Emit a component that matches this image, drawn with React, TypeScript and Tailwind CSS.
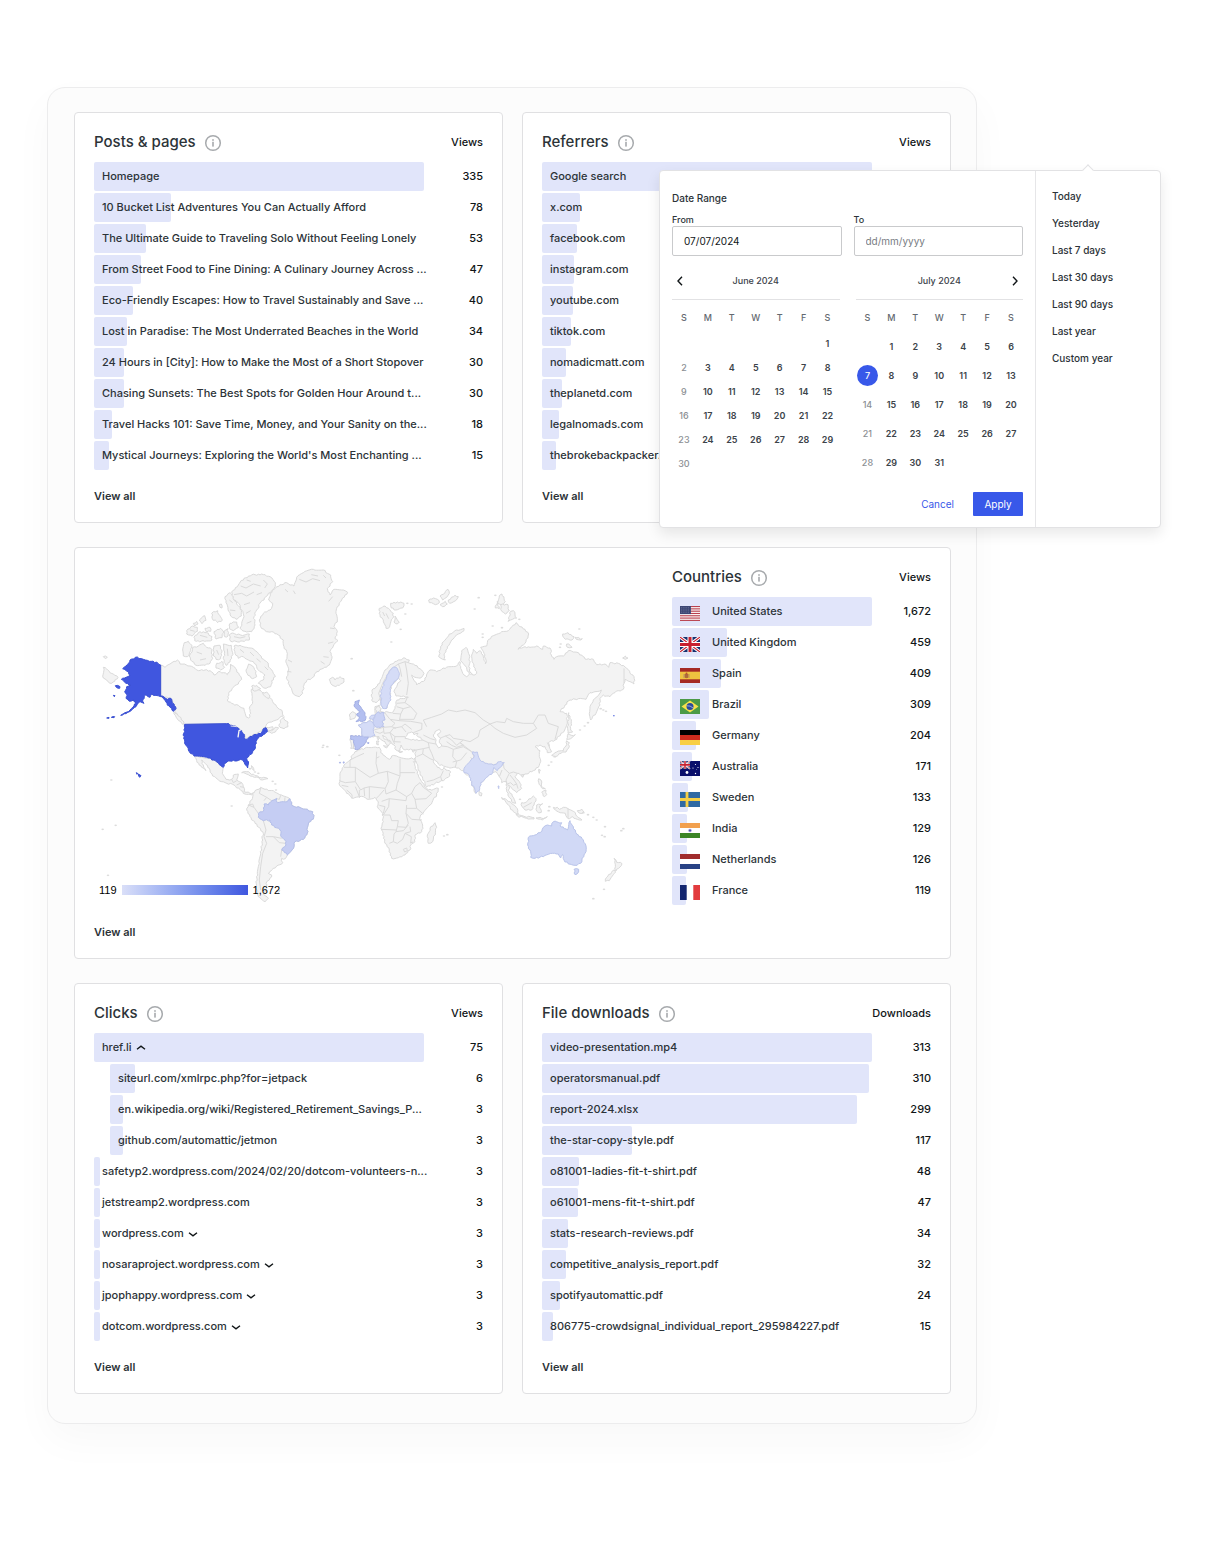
import type { ReactNode } from 'react';

/* ---------- shared pieces ---------- */

function InfoIcon() {
  return (
    <svg width="18" height="18" viewBox="0 0 18 18" fill="none" aria-hidden="true">
      <circle cx="9" cy="9" r="7.3" stroke="#a7aaad" strokeWidth="1.5" />
      <rect x="8.2" y="7.8" width="1.600" height="4.8" fill="#a7aaad" />
      <rect x="8.2" y="5.2" width="1.600" height="1.6" fill="#a7aaad" />
    </svg>
  );
}

function Chevron({ up = false }: { up?: boolean }) {
  return (
    <svg width="10" height="10" viewBox="0 0 10 10" fill="none" stroke="#101517" strokeWidth="1.4" aria-hidden="true">
      <path d={up ? 'M1 6.3 5 3.2 9 6.3' : 'M1 3.7 5 6.8 9 3.7'} />
    </svg>
  );
}

type Row = {
  name: string;
  value?: string;
  pct: number;
  child?: boolean;
  toggle?: 'up' | 'down';
  flag?: ReactNode;
};

function StatsTable({ title, unit, rows }: { title: string; unit: string; rows: Row[] }) {
  return (
    <table className="w-full table-fixed border-separate border-spacing-0">
      <colgroup>
        <col />
        <col className="w-[59px]" />
      </colgroup>
      <thead>
        <tr className="h-[39px]">
          <th scope="col" className="p-0 text-left align-middle font-medium">
            <span className="flex items-center gap-2 text-[15px] whitespace-nowrap">
              {title}
              <InfoIcon />
            </span>
          </th>
          <th scope="col" className="p-0 align-middle font-medium text-[#101517]">
            <span className="flex justify-end">{unit}</span>
          </th>
        </tr>
      </thead>
      <tbody>
        {rows.map((row) => (
          <tr key={row.name} className="h-[31px]">
            <td className={row.child ? 'p-0 pl-4 align-top' : 'p-0 align-top'}>
              <div className="grid h-[29px] items-center">
                <span className="col-start-1 row-start-1 h-full rounded-xs bg-[#e1e5fa]" style={{ width: `${row.pct}%` }} />
                <span className="col-start-1 row-start-1 flex items-center gap-1 pl-2 whitespace-nowrap">
                  {row.flag && <span className="mr-2 mt-1">{row.flag}</span>}
                  {row.toggle ? (
                    <button type="button" aria-expanded={row.toggle === 'up'} className="flex items-center gap-1">
                      {row.name}
                      <Chevron up={row.toggle === 'up'} />
                    </button>
                  ) : (
                    row.name
                  )}
                </span>
              </div>
            </td>
            <td className="p-0 text-right align-top leading-[29px] text-[#101517]">{row.value}</td>
          </tr>
        ))}
      </tbody>
    </table>
  );
}

function Card({ children }: { children: ReactNode }) {
  return (
    <section className="rounded border border-[#e0e0e2] bg-white px-[19px] pt-2.5 pb-4">
      {children}
      <a href="#all" className="mt-3.5 block w-fit leading-5 font-semibold">
        View all
      </a>
    </section>
  );
}

/* ---------- flags ---------- */

function Flag({ children }: { children: ReactNode }) {
  return (
    <svg width="20" height="15" viewBox="0 0 20 15" aria-hidden="true">
      {children}
    </svg>
  );
}

function UnionJack() {
  return (
    <>
      <rect width="20" height="15" fill="#17306f" />
      <path d="M0 0 20 15M20 0 0 15" stroke="#fff" strokeWidth="3.2" />
      <path d="M0 0 20 15M20 0 0 15" stroke="#c8202f" strokeWidth="1.1" />
      <path d="M10 0V15M0 7.5H20" stroke="#fff" strokeWidth="5" />
      <path d="M10 0V15M0 7.5H20" stroke="#c8202f" strokeWidth="3" />
    </>
  );
}

const flags = {
  us: (
    <Flag>
      <rect width="20" height="15" fill="#fff" />
      {[0, 1, 2, 3, 4, 5, 6].map((i) => (
        <rect key={i} y={i * 2.3} width="20" height="1.15" fill="#b8404e" />
      ))}
      <rect width="11" height="8.1" fill="#3c4673" />
      <path d="M1 1.8H10.500M1 4H10.500M1 6.200H10.500" stroke="#8d94b3" strokeWidth=".7" strokeDasharray=".8 1" />
    </Flag>
  ),
  gb: (
    <Flag>
      <UnionJack />
    </Flag>
  ),
  es: (
    <Flag>
      <rect width="20" height="15" fill="#a52a24" />
      <rect y="3.7" width="20" height="7.6" fill="#eec33f" />
      <path d="M4.500 6h4v3.500q-2 1.500-4 0z" fill="#ad6a3c" />
      <path d="M3.700 6v4M9.300 6v4" stroke="#b99a6a" strokeWidth=".7" />
      <circle cx="6.5" cy="5.600" r="1" fill="#b5532f" />
    </Flag>
  ),
  br: (
    <Flag>
      <rect width="20" height="15" fill="#4c9a46" />
      <path d="M10 1.500 18.500 7.500 10 13.500 1.500 7.500z" fill="#f7e04b" />
      <circle cx="10" cy="7.500" r="3.500" fill="#2b4a9c" />
      <path d="M6.700 6.800q3.600-.5 6.400 2.200" stroke="#dfe7f4" strokeWidth=".6" fill="none" />
    </Flag>
  ),
  de: (
    <Flag>
      <rect width="20" height="5" fill="#000" />
      <rect y="5" width="20" height="5" fill="#cc2b1d" />
      <rect y="10" width="20" height="5" fill="#f8cf46" />
    </Flag>
  ),
  au: (
    <Flag>
      <rect width="20" height="15" fill="#0a0f6b" />
      <g transform="scale(.5 .52)">
        <UnionJack />
      </g>
      <g fill="#fff">
        <circle cx="7" cy="11.500" r="1.400" />
        <circle cx="15.500" cy="3.500" r=".6" />
        <circle cx="13" cy="7" r=".6" />
        <circle cx="18" cy="6.500" r=".6" />
        <circle cx="15.500" cy="12.500" r=".7" />
        <circle cx="16.700" cy="8.600" r=".4" />
      </g>
    </Flag>
  ),
  se: (
    <Flag>
      <rect width="20" height="15" fill="#2f69a3" />
      <path d="M7 0V15M0 7.500H20" stroke="#f5cf47" strokeWidth="2.800" />
    </Flag>
  ),
  in: (
    <Flag>
      <rect width="20" height="15" fill="#fff" />
      <rect width="20" height="5" fill="#f2a04e" />
      <rect y="10" width="20" height="5" fill="#3c8527" />
      <circle cx="10" cy="7.500" r="1.700" fill="#9a97d6" />
      <circle cx="10" cy="7.500" r=".8" fill="#3a35a0" />
    </Flag>
  ),
  nl: (
    <Flag>
      <rect width="20" height="5" fill="#a02c2d" />
      <rect y="5" width="20" height="5" fill="#fff" />
      <rect y="10" width="20" height="5" fill="#284285" />
    </Flag>
  ),
  fr: (
    <Flag>
      <rect width="20" height="15" fill="#fff" />
      <rect width="6.700" height="15" fill="#12256f" />
      <rect x="13.300" width="6.700" height="15" fill="#e23b3e" />
    </Flag>
  ),
};

/* ---------- data ---------- */

const views = (name: string, n: number): Row => ({ name, value: String(n), pct: (n / 335) * 100 });

const posts: Row[] = [
  views('Homepage', 335),
  views('10 Bucket List Adventures You Can Actually Afford', 78),
  views('The Ultimate Guide to Traveling Solo Without Feeling Lonely', 53),
  views('From Street Food to Fine Dining: A Culinary Journey Across ...', 47),
  views('Eco-Friendly Escapes: How to Travel Sustainably and Save ...', 40),
  views('Lost in Paradise: The Most Underrated Beaches in the World', 34),
  views('24 Hours in [City]: How to Make the Most of a Short Stopover', 30),
  views('Chasing Sunsets: The Best Spots for Golden Hour Around t...', 30),
  views("Travel Hacks 101: Save Time, Money, and Your Sanity on the...", 18),
  views("Mystical Journeys: Exploring the World's Most Enchanting ...", 15),
];

const referrers: Row[] = [
  { name: 'Google search', pct: 100 },
  { name: 'x.com', pct: 11.6 },
  { name: 'facebook.com', pct: 10.7 },
  { name: 'instagram.com', pct: 9.8 },
  { name: 'youtube.com', pct: 9.4 },
  { name: 'tiktok.com', pct: 8.8 },
  { name: 'nomadicmatt.com', pct: 7.3 },
  { name: 'theplanetd.com', pct: 6.2 },
  { name: 'legalnomads.com', pct: 5.2 },
  { name: 'thebrokebackpacker.', pct: 4.2 },
];

const country = (name: string, n: number, flag: ReactNode): Row => ({
  name,
  value: n.toLocaleString('en-US'),
  pct: (n / 1672) * 100,
  flag,
});

const countries: Row[] = [
  country('United States', 1672, flags.us),
  country('United Kingdom', 459, flags.gb),
  country('Spain', 409, flags.es),
  country('Brazil', 309, flags.br),
  country('Germany', 204, flags.de),
  country('Australia', 171, flags.au),
  country('Sweden', 133, flags.se),
  country('India', 129, flags.in),
  country('Netherlands', 126, flags.nl),
  country('France', 119, flags.fr),
];

const clicks: Row[] = [
  { name: 'href.li', value: '75', pct: 100, toggle: 'up' },
  { name: 'siteurl.com/xmlrpc.php?for=jetpack', value: '6', pct: 8, child: true },
  { name: 'en.wikipedia.org/wiki/Registered_Retirement_Savings_P...', value: '3', pct: 4, child: true },
  { name: 'github.com/automattic/jetmon', value: '3', pct: 4, child: true },
  { name: 'safetyp2.wordpress.com/2024/02/20/dotcom-volunteers-n...', value: '3', pct: 1.8 },
  { name: 'jetstreamp2.wordpress.com', value: '3', pct: 1.8 },
  { name: 'wordpress.com', value: '3', pct: 1.8, toggle: 'down' },
  { name: 'nosaraproject.wordpress.com', value: '3', pct: 1.8, toggle: 'down' },
  { name: 'jpophappy.wordpress.com', value: '3', pct: 1.8, toggle: 'down' },
  { name: 'dotcom.wordpress.com', value: '3', pct: 1.8, toggle: 'down' },
];

const downloads: Row[] = [
  { name: 'video-presentation.mp4', value: '313', pct: 100 },
  { name: 'operatorsmanual.pdf', value: '310', pct: 99 },
  { name: 'report-2024.xlsx', value: '299', pct: 95.5 },
  { name: 'the-star-copy-style.pdf', value: '117', pct: 27.3 },
  { name: 'o81001-ladies-fit-t-shirt.pdf', value: '48', pct: 11.2 },
  { name: 'o61001-mens-fit-t-shirt.pdf', value: '47', pct: 10.9 },
  { name: 'stats-research-reviews.pdf', value: '34', pct: 7.9 },
  { name: 'competitive_analysis_report.pdf', value: '32', pct: 7.4 },
  { name: 'spotifyautomattic.pdf', value: '24', pct: 5.5 },
  { name: '806775-crowdsignal_individual_report_295984227.pdf', value: '15', pct: 3.4 },
];

/* ---------- world map ---------- */

/* Turns a list of points into a closed outline with an irregular coast.
   The offsets depend only on a segment's end points, so neighbours share edges. */
function coast(points: string, ox = 0, oy = 0) {
  const p = points
    .trim()
    .split(/\s+/)
    .map((s) => s.split(',').map(Number))
    .map(([x, y]) => [x + ox, y + oy]);
  const out: string[] = [];
  p.forEach(([ax, ay], i) => {
    const [bx, by] = p[(i + 1) % p.length];
    out.push(`${ax},${ay}`);
    const len = Math.hypot(bx - ax, by - ay);
    const flip = ax > bx || (ax === bx && ay > by);
    const [sx, sy, ex, ey] = flip ? [bx, by, ax, ay] : [ax, ay, bx, by];
    if (len < 8 || len > 70) return;
    const n = Math.floor(len / 5);
    const mids: string[] = [];
    for (let k = 1; k < n; k++) {
      const h = Math.sin(sx * 12.9 + sy * 78.2 + k * 37.7) * 43758.5;
      const r = (h - Math.floor(h) - 0.5) * 5;
      const t = k / n;
      mids.push(
        `${(sx + (ex - sx) * t - ((ey - sy) / len) * r).toFixed(1)},${(sy + (ey - sy) * t + ((ex - sx) / len) * r).toFixed(1)}`,
      );
    }
    out.push(...(flip ? mids.reverse() : mids));
  });
  return `M${out.join('L')}Z`;
}

type Shape = [points: string, ox?: number, oy?: number];

const land: Shape[] = [
  // Canada
  ['212,315 225,322 240,312 252,304 262,300 270,312 283,312 300,318 310,322 325,332 345,330 360,332 372,345 385,335 400,338 412,344 420,330 422,312 430,318 440,330 448,345 455,358 445,372 430,382 416,400 412,420 425,430 445,436 462,445 468,470 476,474 482,460 478,445 488,425 486,405 484,388 495,385 510,390 520,400 535,410 548,425 560,440 575,450 580,468 565,478 545,486 530,492 520,505 530,502 548,500 550,508 534,514 528,503 515,510 500,520 470,535 462,520 445,505 430,498 410,491 284,493 275,480 262,468 255,455 258,446 252,432 240,416 222,412 212,410'],
  ['532,515 545,512 555,502 566,504 556,516 545,520'],
  ['568,492 574,478 582,470 584,480 594,486 594,500 582,506 570,502'],
  ['432,258 450,256 470,262 490,266 505,280 515,295 530,305 540,325 550,340 556,350 545,362 542,380 528,385 515,378 505,370 520,360 525,345 510,335 500,320 490,305 475,300 460,290 445,295 435,280'],
  ['468,330 476,312 488,318 498,334 500,350 488,356 474,346'],
  ['485,378 500,376 512,386 500,392 488,390'],
  ['518,398 530,396 540,408 536,416 524,408'],
  ['283,248 295,244 306,256 302,272 292,290 280,288 278,270'],
  ['308,262 325,258 340,250 350,262 365,268 368,295 360,310 340,315 318,316 302,300 298,288 306,276'],
  ['372,258 390,256 396,276 392,296 378,298 370,282'],
  ['400,252 424,256 428,278 420,306 408,316 400,296 404,276'],
  ['380,310 396,304 404,322 392,330 378,324'],
  ['290,212 308,198 322,202 322,214 306,228 290,222'],
  ['312,232 330,215 350,218 366,230 366,240 344,244 314,242'],
  ['328,180 344,167 348,181 336,191'],
  ['310,190 320,184 324,192 314,198'],
  ['365,160 383,152 389,166 397,180 383,188 367,176'],
  ['372,215 392,205 400,213 396,233 378,237'],
  ['388,134 394,132 396,144 390,142'],
  ['345,205 360,202 362,214 350,216'],
  ['402,214 414,206 414,228 404,230'],
  ['418,225 428,219 452,225 478,222 478,240 448,246 422,244'],
  ['420,190 440,186 446,202 430,212 418,206'],
  ['405,110 420,98 430,112 440,132 452,142 454,168 438,178 424,170 414,148 408,128'],
  ['425,96 445,75 462,55 485,45 515,42 540,50 556,68 552,85 535,100 522,120 510,130 500,150 492,170 495,195 485,215 465,214 450,205 455,190 462,170 455,150 450,135 432,120'],
  ['252,455 262,462 282,486 280,494 266,482 256,466'],
  ['40,322 58,334 74,346 84,352 74,364 60,370 50,360 40,354'],
  ['40,290 46,288 52,292 46,296'],
  // Greenland, Iceland, Arctic islands
  ['508,180 520,160 540,150 548,130 536,120 540,100 560,80 590,68 612,78 620,52 640,38 670,28 700,30 722,45 728,65 712,85 720,105 732,88 760,90 773,97 755,120 742,140 738,160 742,180 732,200 742,215 735,236 744,242 730,258 720,275 726,290 718,315 700,325 680,335 665,355 650,362 640,380 638,400 628,410 610,402 600,380 590,350 596,330 588,300 592,280 582,260 580,240 565,225 545,215 525,212 512,200'],
  ['718,358 728,352 735,360 750,350 762,356 762,366 748,376 732,378 722,370'],
  ['868,145 885,138 895,145 910,160 908,175 895,205 888,205 880,180 870,170'],
  ['902,130 922,126 942,130 938,144 918,150 904,144'],
  ['915,168 928,186 922,192 912,186'],
  ['1016,120 1030,114 1042,118 1048,128 1036,134 1018,128'],
  ['1050,108 1064,100 1074,88 1078,100 1070,112 1058,120'],
  ['1075,120 1095,106 1105,110 1097,122 1079,130'],
  ['1050,134 1066,124 1072,132 1058,140'],
  ['1122,205 1100,210 1078,222 1060,245 1050,270 1046,290 1058,298 1066,300 1062,285 1072,260 1085,240 1105,222 1122,212'],
  ['1228,108 1236,102 1246,125 1240,135 1222,130'],
  ['1232,134 1254,134 1258,152 1246,162 1232,148'],
  ['1216,144 1222,124 1228,146'],
  ['1262,154 1270,152 1280,174 1262,180 1254,184'],
  ['1418,222 1434,218 1452,230 1446,240 1426,238 1418,228'],
  ['1455,232 1477,236 1473,240 1459,238'],
  ['1430,252 1436,252 1446,262 1432,262'],
  ['1598,294 1606,288 1614,294 1606,298'],
  // Europe and Asia
  ['845,410 846,390 862,378 875,355 885,330 905,312 925,300 945,294 958,300 955,308 975,316 995,330 1002,340 995,352 975,352 965,345 972,362 980,375 990,370 1005,360 1012,340 1020,330 1040,335 1055,328 1075,320 1100,318 1110,305 1112,325 1122,345 1130,350 1138,342 1126,318 1112,302 1115,272 1128,262 1138,285 1138,330 1145,340 1148,345 1160,340 1150,310 1145,285 1150,268 1160,280 1170,272 1180,290 1186,312 1188,300 1182,280 1172,262 1190,258 1196,238 1215,225 1235,215 1255,212 1265,200 1278,188 1290,200 1305,208 1316,222 1308,245 1300,255 1284,268 1300,262 1320,262 1340,258 1358,268 1360,258 1380,264 1384,285 1392,298 1400,290 1420,288 1435,272 1455,276 1475,285 1485,297 1510,298 1520,314 1545,312 1556,322 1560,308 1590,312 1610,325 1620,340 1632,350 1632,372 1620,365 1605,358 1602,370 1600,388 1585,392 1570,400 1560,410 1540,405 1530,415 1530,435 1520,455 1502,480 1498,460 1500,440 1510,420 1528,402 1534,390 1515,395 1500,398 1488,418 1465,416 1440,420 1425,435 1410,455 1430,460 1432,485 1422,515 1395,540 1375,548 1378,560 1385,575 1372,578 1365,560 1350,555 1335,560 1350,572 1348,590 1352,605 1345,622 1325,635 1305,642 1295,648 1282,640 1275,650 1288,665 1295,685 1285,692 1280,698 1270,690 1262,680 1255,675 1258,695 1270,712 1277,730 1268,728 1256,710 1250,690 1248,665 1235,668 1228,650 1218,635 1208,638 1200,640 1190,652 1172,668 1168,690 1158,700 1152,692 1145,670 1138,645 1130,645 1120,632 1100,624 1075,622 1060,618 1045,612 1032,598 1030,605 1042,622 1056,630 1062,622 1068,630 1082,636 1075,652 1050,665 1010,680 1005,670 990,640 980,610 975,595 978,570 940,568 933,555 930,572 918,570 912,555 890,535 878,525 880,532 892,542 902,550 895,558 885,545 865,530 855,528 835,532 822,555 800,570 782,565 782,545 782,527 817,527 815,505 805,495 825,488 840,482 850,468 856,462 855,440 868,435 872,455 905,458 915,445 918,425 930,415 955,412 940,408 918,408 912,395 922,375 932,362 925,352 910,370 900,390 900,415 888,447 875,440 870,415 858,428 848,425'],
  ['1436,458 1444,485 1442,510 1448,516 1434,520 1434,490'],
  ['856,448 866,438 874,446 870,458 860,458'],
  ['778,465 788,455 798,461 794,475 780,479'],
  ['862,530 867,530 865,540'],
  ['860,543 867,543 865,555 860,553'],
  ['880,557 894,558 890,564'],
  ['925,574 938,575 930,578'],
  ['966,572 975,569 970,577'],
  // Mexico and Central America
  ['312,78 330,82 355,84 372,90 385,98 400,112 397,130 408,148 425,148 430,135 445,132 440,150 455,158 460,170 462,185 480,190 490,188 485,195 465,192 450,178 432,165 395,155 368,138 360,120 345,100 335,90 340,105 348,122 335,112 320,92', 0, 510],
  ['455,128 470,125 495,137 507,142 493,142 475,134', 0, 510],
  ['505,142 521,142 534,146 511,149', 0, 510],
  ['484,107 488,110 492,122 486,116', 0, 510],
  // South America
  ['488,190 495,182 512,172 525,178 550,182 575,195 598,205 608,228 635,235 668,245 671,262 655,282 650,315 640,328 615,335 612,350 592,375 586,386 575,385 578,398 560,408 545,420 535,430 545,435 538,450 528,460 530,475 520,490 535,505 525,515 505,500 498,470 502,430 508,400 512,370 518,330 518,305 495,280 480,260 470,240 475,225 485,210', 0, 510],
  ['560,482 570,482 566,487', 0, 510],
  // Africa
  ['105,185 115,180 135,174 160,172 178,172 182,188 195,198 208,208 215,198 230,198 250,205 270,206 285,205 288,216 280,215 286,230 295,255 305,275 318,292 325,300 355,295 350,315 330,345 312,365 302,375 300,390 308,405 305,425 285,435 285,455 272,465 270,480 255,495 235,503 215,505 208,480 195,460 188,425 183,415 190,395 188,370 172,350 175,335 165,322 148,328 130,320 100,325 80,310 65,292 57,280 60,250 72,225 90,210 98,195', 690, 390],
  ['345,398 350,412 338,455 325,460 322,440 330,415', 690, 390],
  // South-east Asia, Japan, Oceania
  ['125,232 140,240 160,254 172,266 175,282 160,275 145,255', 1110, 480],
  ['168,282 190,288 222,293 222,297 200,295 172,288', 1110, 480],
  ['228,294 240,292 250,296 262,290 248,300 234,297', 1110, 480],
  ['185,248 200,245 220,228 228,236 222,255 215,270 195,270 186,260', 1110, 480],
  ['230,255 248,251 238,261 244,277 236,279 228,268', 1110, 480],
  ['236,176 243,180 244,198 256,206 248,206 238,194', 1110, 480],
  ['245,217 258,210 260,224 254,230', 1110, 480],
  ['280,262 292,262 298,268 310,262 326,268 346,278 352,290 366,300 352,298 338,290 324,296 316,280 296,276', 1110, 480],
  ['352,272 366,268 372,276 360,280', 1110, 480],
  ['275,106 290,96 310,92 318,78 320,62 328,68 326,84 318,96 298,100 286,110', 1110, 480],
  ['320,58 324,42 334,46 346,44 332,56', 1110, 480],
  ['236,148 241,150 238,160', 1110, 480],
  ['184,164 192,164 188,172', 1110, 480],
  ['58,214 66,220 64,228 58,226', 1110, 480],
  ['462,415 470,427 486,431 476,445 468,453 464,447 466,433', 1110, 480],
  ['462,450 467,456 448,482 436,484 440,472', 1110, 480],
];

const water: Shape[] = [
  ['945,535 952,520 965,516 972,524 984,520 980,526 992,532 998,540 975,541 958,538'],
  ['1035,515 1048,508 1052,514 1042,523 1052,534 1048,542 1055,558 1046,564 1038,552 1036,535 1030,524'],
];

const highlighted: { fill: string; stroke: string; shapes: Shape[] }[] = [
  {
    fill: '#4056df',
    stroke: '#3a50d2',
    shapes: [
      ['212,315 212,410 198,406 185,402 180,412 168,404 158,420 162,430 150,425 138,440 125,450 112,458 98,465 92,466 105,458 120,450 132,438 138,428 130,420 118,424 108,415 112,405 104,395 110,380 122,376 108,370 94,358 108,352 120,346 116,336 98,326 108,318 120,300 142,291 160,298 178,304 200,306'],
      ['212,408 222,411 232,418 240,414 252,432 258,446 250,454 240,442 228,426'],
      ['76,377 90,380 89,385 79,382'],
      ['70,406 75,407 73,410'],
      ['50,474 57,472 57,475'],
      ['64,472 74,470 72,473'],
      ['284,493 410,491 430,498 446,505 462,520 466,538 490,525 515,517 520,506 528,503 532,515 520,524 505,534 498,545 496,565 485,582 470,595 475,612 473,624 463,608 458,600 435,603 420,603 402,612 400,622 385,608 372,600 355,594 312,588 295,570 284,545 281,520'],
      ['139,128 143,130 141,133', 0, 510],
      ['145,134 153,139 149,144 146,140', 0, 508],
    ],
  },
  {
    fill: '#c5cdf3',
    stroke: '#b4bfe9',
    shapes: [
      ['545,212 560,205 562,218 580,215 592,215 600,206 608,228 635,235 668,245 671,262 655,282 650,315 640,328 615,335 612,350 592,375 575,360 588,345 588,335 575,322 570,300 545,285 540,270 520,272 505,262 505,250 522,240 522,222 535,225', 0, 510],
    ],
  },
  {
    fill: '#b3bff0',
    stroke: '#a2aee3',
    shapes: [['105,35 118,30 116,45 128,60 138,80 135,92 108,95 118,85 110,72 120,64 108,55 102,45', 690, 390]],
  },
  {
    fill: '#b8c3f2',
    stroke: '#a8b3e6',
    shapes: [
      ['92,137 127,137 145,142 132,165 115,178 105,178 102,150 92,148', 690, 390],
      ['142,158 147,158 145,162', 690, 390],
      ['58,217 62,217 60,220', 690, 390],
      ['69,216 73,216 71,220', 690, 390],
    ],
  },
  {
    fill: '#ccd4f5',
    stroke: '#b9c3ea',
    shapes: [['165,75 170,70 174,65 180,70 192,68 195,90 186,96 192,110 170,112 162,105 160,88', 690, 390]],
  },
  {
    fill: '#d5dcf7',
    stroke: '#bfc8ec',
    shapes: [
      ['115,105 135,98 150,92 162,105 160,118 165,136 150,142 127,137 125,115', 690, 390],
      ['148,86 154,76 163,75 160,90', 690, 390],
      ['905,325 918,322 926,335 926,352 912,365 902,380 900,398 903,420 890,445 878,445 873,430 872,405 878,380 890,350'],
      ['38,95 52,96 56,112 60,120 80,130 100,135 118,125 133,128 122,140 112,152 102,142 98,158 80,172 62,188 58,212 48,220 35,190 28,165 12,158 15,140 30,125 42,112', 1110, 480],
      ['114,198 117,198 116,206', 1110, 480],
    ],
  },
  {
    fill: '#d1d9f6',
    stroke: '#b9c4ea',
    shapes: [
      ['205,352 225,345 240,338 250,322 262,315 275,318 280,305 305,308 300,318 322,330 330,302 340,320 350,342 370,360 378,378 375,400 362,430 345,436 325,432 312,420 308,404 302,414 295,402 278,400 250,410 225,415 212,412 212,395 203,375', 1110, 480],
      ['342,448 356,448 351,462 345,464', 1110, 480],
    ],
  },
];

const borders = [
  // Asia
  'M1010,500L1000,480L1025,472L1055,462L1075,450L1100,455L1125,450L1155,458L1180,480L1200,492L1220,485L1245,488L1250,475L1270,485L1300,490L1330,490L1345,465L1365,465L1375,490L1405,500L1395,538',
  'M1200,492L1215,505L1240,520L1275,532L1310,525L1340,505L1330,490',
  'M1200,492L1170,510L1165,530L1140,545L1120,540L1110,548L1145,575L1152,590L1148,600L1142,592',
  'M1052,534L1066,528L1085,540L1100,556L1110,548L1120,555L1100,562L1085,556L1070,545M1066,528L1080,524L1090,535L1120,540',
  'M1166,600L1190,612L1210,614L1240,608L1242,625L1258,640L1270,636L1282,640',
  'M1170,608L1190,616M1055,558L1072,560L1090,568L1088,590L1100,604L1096,622M1090,568L1120,560L1145,575M1088,606L1112,600L1122,588L1130,578',
  'M1000,525L1022,536L1036,540M998,540L1015,548L1038,552M1015,548L1018,565L1025,580L1032,598M978,570L1000,566L1018,562M1000,566L998,582L1020,596L1030,600M998,582L980,590M1010,665L1030,660L1052,650L1056,664M1052,650L1060,632',
  'M1236,630L1228,650M1258,640L1248,660L1252,676M1260,645L1272,660L1280,672L1270,676L1262,668L1252,672M1280,672L1284,686M1372,548L1378,560',
  'M1300,742L1325,728M1434,744L1434,774',
  'M1602,325L1602,370M1145,340L1142,345',
  // Europe
  'M875,428L866,400L878,370L900,330L925,312L945,305L955,308M935,350L930,325L925,312M945,305L950,330L955,370L950,405',
  'M782,537L792,537L790,565M920,430L945,428L952,412M920,440L940,446L962,440L945,428M940,446L932,462L908,460M932,462L928,482L900,478L884,458M928,482L962,484L996,490L995,508L970,518M962,440L980,460L972,478L930,478',
  'M852,510L880,502L905,500L915,490L900,478M880,502L882,520L900,518L910,505L935,500L948,516M900,518L915,530L945,530M900,518L908,540L914,552M915,530L912,545L932,546M935,500L945,492L965,508M855,515L870,520L880,515M905,500L918,505',
  // Africa
  'M762,622H780V600L800,590L822,580M780,622L796,622L840,652L865,640L858,610L860,575M796,622L796,665L766,668L748,662M858,595L868,590M865,640L892,634L895,665L886,685L840,680L822,684L812,690L796,665M892,634L930,648V596M930,638H975M930,648L922,670L918,690L888,702L885,685M918,690L950,710L965,700L975,680L990,668M950,710L948,722L898,716L875,724M990,668L1000,682L1025,700L1008,716L975,718L965,700',
  'M822,684L824,708M838,680L838,716M796,680L808,710M770,690L786,704L786,716M808,690L808,714M755,676L775,680M858,716L868,706L882,690',
  'M868,736L885,740L880,760M898,716L896,740L880,765L900,765L905,782L925,782L922,800L948,802L955,790L948,760L950,735M975,718L980,745L1000,762M950,745L980,745M948,760L965,778L996,780M874,808L920,810M922,800L918,815L912,822L910,845L898,850M918,815L940,812L955,795M910,845L922,850L938,838L945,820L962,815L960,800M945,820L964,830L962,850M940,868L950,864L952,872L944,876L940,868M962,848L970,846',
  // Americas
  'M425,658L430,668L440,662M440,675L455,668M450,680L462,682',
  'M512,684L508,700L530,712L545,722M572,706L568,718L560,716M585,712L584,724M475,735L492,742L505,760M492,742L488,732L474,736M530,712L522,722M520,782L528,810L522,830L530,850L518,880L512,920L508,960L512,990M528,830L550,830L575,835M550,830L568,848L588,850M575,870L572,890',
  // Arctic fjords
  'M432,104L455,100L470,108L492,96M452,78L468,84L490,72L512,78M470,60L482,64M520,60L532,72L524,84M500,104L516,98M462,134L480,128M468,160L482,152M470,190L484,184M418,120L428,128M420,150L436,152M628,58L648,66L668,56L690,62M664,44L684,48M700,46L708,54M585,88L594,96M610,92L616,102M728,110L716,124M734,206L720,204M730,246L714,250M716,292L700,290M704,312L692,304M594,300L606,306M592,334L604,336',
  'M320,276L336,282M330,300L348,296M380,270L386,284M412,266L414,288M450,268L462,278M480,276L492,288M500,296L512,306M524,320L534,330M300,210L314,214M330,226L352,232M432,230L450,234L466,230M888,160L896,176M878,156L884,168',
];

const specks: [number, number][] = [
  [64, 660], [77, 796], [38, 808], [54, 946], [425, 738], [700, 556], [712, 560], [785, 296], [904, 246], [932, 208],
  [952, 130], [965, 132], [946, 162], [1166, 113], [1154, 147], [1216, 106], [1208, 198], [1178, 222], [1178, 232], [1236, 203],
  [1288, 178], [1468, 207], [1412, 252], [1410, 262], [1540, 450], [1548, 454], [1532, 446], [1494, 488], [1484, 498], [1470, 510],
  [1384, 606], [1376, 616], [1394, 590], [1480, 758], [1494, 764], [1510, 772], [1520, 780], [1545, 800], [1536, 826], [1544, 830],
  [1594, 812], [1600, 806], [1542, 988], [1510, 1016], [1056, 681], [1062, 828], [1072, 824], [556, 672], [558, 690], [548, 664],
  [1378, 740], [1376, 752], [1290, 718], [698, 562], [790, 392], [748, 586], [480, 626], [495, 636], [505, 640],
];

function WorldMap() {
  return (
    <svg viewBox="12 -6 1638 1050" className="w-full" role="img" aria-label="Views by country">
      <g fill="#f3f3f3" stroke="#dadada" strokeWidth="3" strokeLinejoin="round">
        {land.map((s, i) => (
          <path key={i} d={coast(...s)} />
        ))}
        <path d={borders.join('')} fill="none" />
      </g>
      <g fill="#fff" stroke="#dadada" strokeWidth="3" strokeLinejoin="round">
        {water.map((s, i) => (
          <path key={i} d={coast(...s)} />
        ))}
      </g>
      <g fill="#dcdcdc">
        {specks.map(([x, y]) => (
          <ellipse key={`${x}-${y}`} cx={x} cy={y} rx="4" ry="2.500" />
        ))}
      </g>
      {highlighted.map((c) => (
        <g key={c.fill} fill={c.fill} stroke={c.stroke} strokeWidth="3" strokeLinejoin="round">
          {c.shapes.map((s, i) => (
            <path key={i} d={coast(...s)} />
          ))}
        </g>
      ))}
      <path d="M444,532L447,512L455,508M458,512L464,522" stroke="#f5f5f5" strokeWidth="4" fill="none" />
      <path d="M422,498L440,500" stroke="#d8dcf0" strokeWidth="3" fill="none" />
      <rect x="1569" y="465" width="5" height="4" fill="#7f90e8" />
    </svg>
  );
}

/* ---------- date picker ---------- */

const weekdays = ['Sunday', 'Monday', 'Tuesday', 'Wednesday', 'Thursday', 'Friday', 'Saturday'];

function Month({
  name,
  first,
  days,
  selected,
  nav,
}: {
  name: string;
  first: number;
  days: number;
  selected?: number;
  nav: 'prev' | 'next';
}) {
  const weeks = Array.from({ length: Math.ceil((first + days) / 7) }, (_, w) =>
    Array.from({ length: 7 }, (_, d) => w * 7 + d - first + 1),
  );
  const arrow = (
    <button type="button" aria-label={nav === 'prev' ? 'Previous month' : 'Next month'} className="flex w-4 justify-center">
      <svg width="8" height="12" viewBox="0 0 8 12" fill="none" stroke="#101517" strokeWidth="1.400" aria-hidden="true">
        <path d={nav === 'prev' ? 'M6 1.800 2 6l4 4.200' : 'M2 1.800 6 6l-4 4.200'} />
      </svg>
    </button>
  );
  return (
    <div className="flex-1">
      <div className="flex h-9 items-center border-b border-[#e2e2e4] pb-0.5">
        {nav === 'prev' ? arrow : <span className="w-4" />}
        <span className="flex-1 text-center text-[9px] text-[#3c434a]">{name}</span>
        {nav === 'next' ? arrow : <span className="w-4" />}
      </div>
      <table className="w-full table-fixed border-separate border-spacing-0 text-center text-[9px]">
        <thead>
          <tr className="h-8">
            {weekdays.map((d) => (
              <th key={d} scope="col" abbr={d} className="p-0 pt-1 align-middle font-medium text-[#646970]">
                {d[0]}
              </th>
            ))}
          </tr>
        </thead>
        <tbody>
          {weeks.map((week, w) => (
            <tr key={w} className={weeks.length > 5 ? 'h-6' : 'h-[29px]'}>
              {week.map((day, i) => (
                <td key={i} className="p-0 align-middle">
                  {day > 0 && day <= days && (
                    <button
                      type="button"
                      className={
                        day === selected
                          ? 'size-[21px] rounded-full bg-[#3858e9] font-medium text-white'
                          : i === 0
                            ? 'size-[21px] font-medium text-[#8c8f94]'
                            : 'size-[21px] font-semibold text-[#3c434a]'
                      }
                    >
                      {day}
                    </button>
                  )}
                </td>
              ))}
            </tr>
          ))}
        </tbody>
      </table>
    </div>
  );
}

const presets = ['Today', 'Yesterday', 'Last 7 days', 'Last 30 days', 'Last 90 days', 'Last year', 'Custom year'];

function DatePopover() {
  return (
    <div className="absolute top-[83px] right-0 flex h-[358px] w-[502px] rounded border border-[#e2e2e4] bg-white text-[10px] shadow-[0_6px_14px_rgba(0,0,0,0.09)]">
      <span className="absolute -top-[5px] right-[68px] size-2 rotate-45 border-t border-l border-[#e2e2e4] bg-white" />
      <div className="flex flex-1 flex-col px-3 pt-[19px] pb-[11px]">
        <h2 className="leading-4 font-medium">Date Range</h2>
        <div className="mt-2 flex gap-3">
          <label className="flex-1 text-[9px] leading-3 font-medium">
            From
            <input
              type="text"
              defaultValue="07/07/2024"
              className="block h-[30px] w-full rounded-xs border border-[#c9cacc] px-[11px] text-[10px] font-normal text-[#101517]"
            />
          </label>
          <label className="flex-1 text-[9px] leading-3 font-medium">
            To
            <input
              type="text"
              placeholder="dd/mm/yyyy"
              className="block h-[30px] w-full rounded-xs border border-[#c9cacc] px-[11px] text-[10px] font-normal placeholder:text-[#787c82]"
            />
          </label>
        </div>
        <div className="mt-2 flex flex-1 items-start gap-4">
          <Month name="June 2024" first={6} days={30} nav="prev" />
          <Month name="July 2024" first={1} days={31} selected={7} nav="next" />
        </div>
        <div className="flex justify-end gap-2 font-normal">
          <button type="button" className="px-[11px] text-[#3858e9]">
            Cancel
          </button>
          <button type="button" className="h-6 w-[50px] rounded-[1px] bg-[#3858e9] text-white">
            Apply
          </button>
        </div>
      </div>
      <ul className="w-[125px] border-l border-[#e6e6e8] pt-3 pl-4 font-medium">
        {presets.map((p) => (
          <li key={p}>
            <button type="button" className="block leading-[27px]">
              {p}
            </button>
          </li>
        ))}
      </ul>
    </div>
  );
}

/* ---------- page ---------- */

export default function App() {
  return (
    <div className="min-h-screen bg-white px-[47px] pt-[87px] pb-[121px] font-['Inter',sans-serif] text-[11px] font-medium text-[#2c3338]">
      <div className="relative">
        <main className="mr-[184px] flex flex-col gap-6 rounded-[18px] border border-[#ececed] bg-[#fcfcfc] pt-6 pr-[25px] pb-[29px] pl-[26px] shadow-[0_16px_40px_rgba(0,0,0,0.03)]">
          <div className="grid grid-cols-2 gap-[19px]">
            <Card>
              <StatsTable title="Posts & pages" unit="Views" rows={posts} />
            </Card>
            <Card>
              <StatsTable title="Referrers" unit="Views" rows={referrers} />
            </Card>
          </div>
          <Card>
            <div className="flex items-start gap-8">
              <div className="relative flex-1">
                <WorldMap />
                <div className="absolute bottom-3 left-[5px] flex items-center gap-[5px] font-['Liberation_Sans',sans-serif] leading-3 font-normal text-black">
                  119
                  <span className="h-2.5 w-[126px] bg-linear-to-r from-[#dadff8] to-[#4056df]" />
                  1,672
                </div>
              </div>
              <div className="w-[259px]">
                <StatsTable title="Countries" unit="Views" rows={countries} />
              </div>
            </div>
          </Card>
          <div className="grid grid-cols-2 gap-[19px]">
            <Card>
              <StatsTable title="Clicks" unit="Views" rows={clicks} />
            </Card>
            <Card>
              <StatsTable title="File downloads" unit="Downloads" rows={downloads} />
            </Card>
          </div>
        </main>
        <DatePopover />
      </div>
    </div>
  );
}
